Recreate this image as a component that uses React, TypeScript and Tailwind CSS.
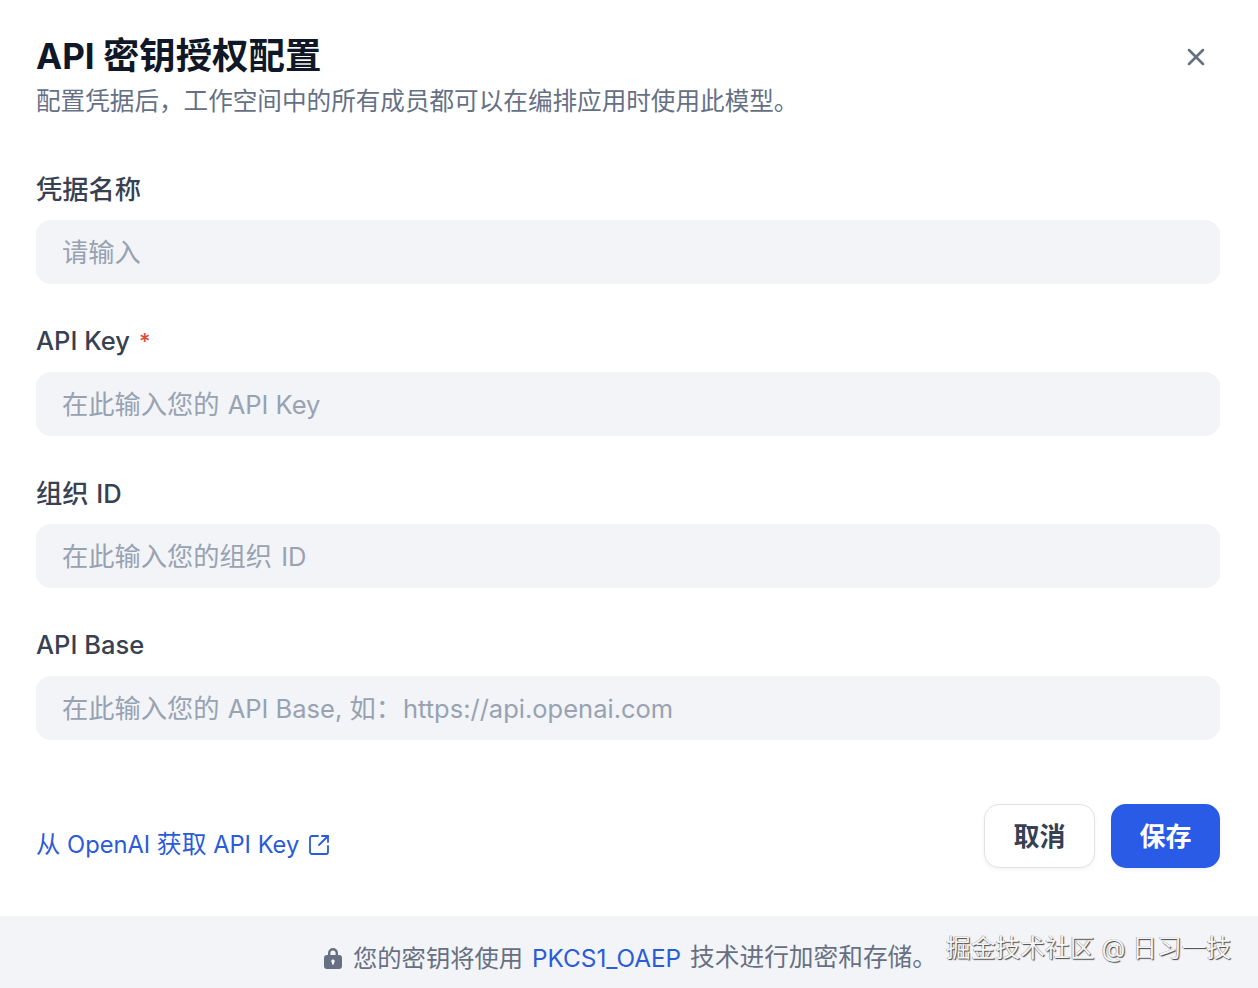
import type { ReactNode } from "react";
import { X, SquareArrowOutUpRight } from "lucide-react";

const font = "font-['Inter','Noto_Sans_CJK_SC',sans-serif]";

function C({ children }: { children: ReactNode }) {
  return <span className="text-[26.25px]">{children}</span>;
}

function Field({
  label,
  placeholder,
  required,
  cjkLabel,
}: {
  label: ReactNode;
  placeholder: ReactNode;
  required?: boolean;
  cjkLabel?: boolean;
}) {
  return (
    <div className="flex flex-col">
      <div
        className={`flex h-[36px] items-center text-[25.5px] font-medium leading-[36px] text-[#374151] ${cjkLabel ? "pt-[2px]" : ""}`}
      >
        <span>{label}</span>
        {required && <span className="ml-[9px] text-[22px] text-[#e0493a]">*</span>}
      </div>
      <div className="mt-[13px] flex h-[64px] items-center rounded-[15px] bg-[#f2f4f7] px-[26px] pt-[2px] text-[25.5px] text-[#98a2b2]">
        <span className="whitespace-pre">{placeholder}</span>
      </div>
    </div>
  );
}

export default function App() {
  return (
    <div className={`relative flex h-[988px] w-[1258px] flex-col overflow-hidden bg-white ${font}`}>
      <div className="flex flex-col pl-[36px] pr-[38px] pt-[33px]">
        <div className="flex items-start justify-between">
          <div className="flex flex-col">
            <h1 className="text-[35px] font-bold leading-[46px] text-[#101828]">
              API <span className="text-[36.4px]">密钥授权配置</span>
            </h1>
            <p className="mt-[5px] text-[24.6px] leading-[34px] text-[#667085]">
              配置凭据后，工作空间中的所有成员都可以在编排应用时使用此模型。
            </p>
          </div>
          <div className="flex h-[48px] w-[48px] items-center justify-center">
            <X size={28} strokeWidth={2.2} className="text-[#676f83]" />
          </div>
        </div>
        <div className="mt-[53px] flex flex-col gap-[39px]">
          <Field cjkLabel label={<C>凭据名称</C>} placeholder={<C>请输入</C>} />
          <Field
            label="API Key"
            placeholder={
              <>
                <span className="mr-[1px]"><C>在此输入您的</C></span> API Key
              </>
            }
            required
          />
          <Field
            cjkLabel
            label={
              <>
                <span className="mr-[1px]"><C>组织</C></span> ID
              </>
            }
            placeholder={
              <>
                <span className="mr-[2px]"><C>在此输入您的组织</C></span> ID
              </>
            }
          />
          <Field
            label="API Base"
            placeholder={
              <>
                <span className="mr-[1px]"><C>在此输入您的</C></span> API Base, <C>如：</C>
                <span className="ml-[1px]">https://api.openai.com</span>
              </>
            }
          />
        </div>
        <div className="mt-[64px] flex h-[64px] items-center justify-between">
          <div className="mt-[17px] flex items-center gap-[8px] text-[23.7px] leading-[34px] text-[#2a5bd9]">
            <span>
              <span className="text-[24.4px]">从</span> OpenAI <span className="text-[24.8px]">获取</span> API Key
            </span>
            <SquareArrowOutUpRight size={24} strokeWidth={1.8} />
          </div>
          <div className="flex gap-[16px]">
            <div className="flex h-[64px] w-[111px] items-center justify-center rounded-[15px] border border-[#e0e2e7] bg-white pt-[1px] text-[26px] font-semibold text-[#354052] shadow-[0_2px_4px_rgba(16,24,40,0.05)]">
              取消
            </div>
            <div className="flex h-[64px] w-[109px] items-center justify-center rounded-[15px] bg-[#2a5be6] pt-[1px] text-[26px] font-semibold text-white shadow-[0_2px_4px_rgba(16,24,40,0.06)]">
              保存
            </div>
          </div>
        </div>
      </div>
      <div className="mt-[48px] flex h-[72px] items-center bg-[#f2f4f7] pl-[323px] pt-[12px] text-[24.3px] text-[#676f83]">
        <svg width="20" height="22" viewBox="0 0 20 22" className="mr-[10px]">
          <path
            fill="#676f83"
            fillRule="evenodd"
            d="M5 8V6a5 5 0 0 1 10 0v2h1a3 3 0 0 1 3 3v8a3 3 0 0 1-3 3H4a3 3 0 0 1-3-3v-8a3 3 0 0 1 3-3h1Zm2.4 0h5.2V6a2.6 2.6 0 0 0-5.2 0v2Zm2.6 4.4a1.8 1.8 0 0 0-1 3.3v1.7h2v-1.7a1.8 1.8 0 0 0-1-3.3Z"
          />
        </svg>
        <span>您的密钥将使用</span>
        <span className="ml-[9px] text-[#2a5bd9]">PKCS1_OAEP</span>
        <span className="ml-[9px] text-[24.7px]">技术进行加密和存储。</span>
      </div>
      <div className="absolute left-[946px] top-[930px] text-[24.75px] leading-[36px] text-[#f4f5f7] [text-shadow:1px_1px_1px_rgba(40,40,40,0.85),-0.5px_-0.5px_0.5px_rgba(40,40,40,0.55)]">
        掘金技术社区 @ 日习一技
      </div>
    </div>
  );
}
